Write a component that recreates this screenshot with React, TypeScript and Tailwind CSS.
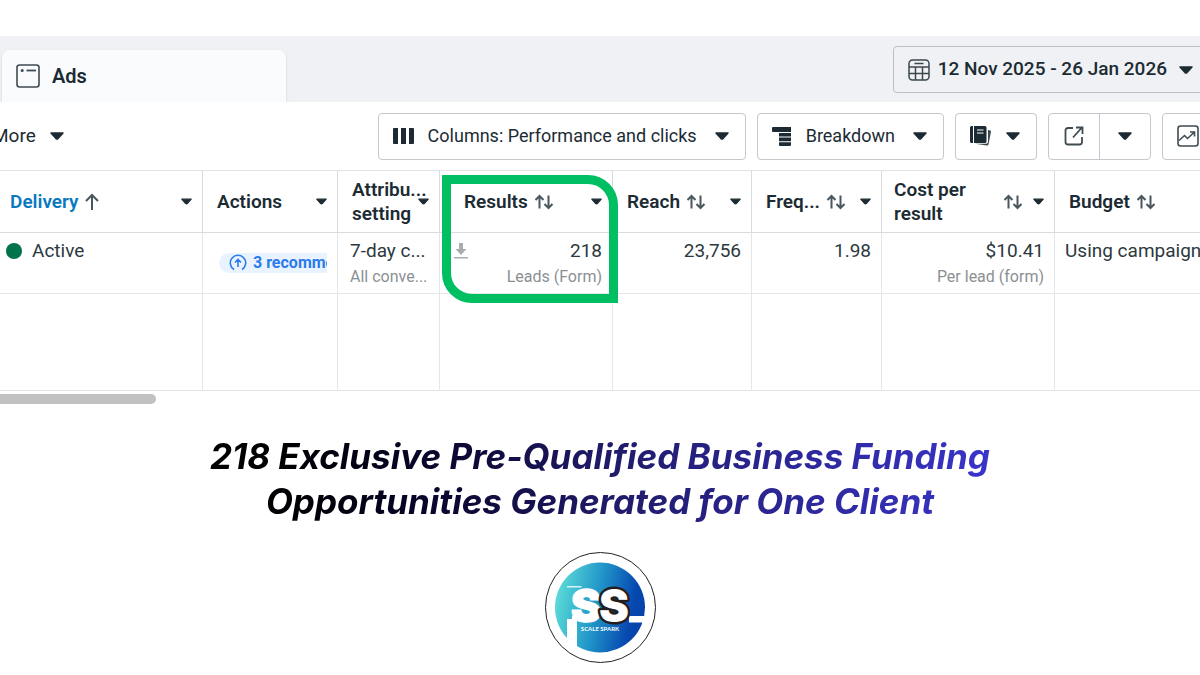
import type { ReactNode } from "react";
import clsx from "clsx";

interface Column {
  name: string;
  width: string;
  title: ReactNode;
  sort?: "up" | "both";
  spread?: boolean;
  menu?: boolean;
  active?: boolean;
  highlight?: boolean;
  padding: string;
}

const columns: Column[] = [
  { name: "delivery", width: "w-[203px]", title: "Delivery", sort: "up", menu: true, active: true, padding: "pl-2.5" },
  { name: "actions", width: "w-[135px]", title: "Actions", menu: true, padding: "pl-3.5" },
  { name: "attribution", width: "w-[102px]", title: <>Attribu...<br />setting</>, menu: true, padding: "pl-3.5" },
  { name: "results", width: "w-[173px]", title: "Results", sort: "both", menu: true, highlight: true, padding: "pl-6" },
  { name: "reach", width: "w-[139px]", title: "Reach", sort: "both", menu: true, padding: "pl-3.5" },
  { name: "frequency", width: "w-[130px]", title: "Freq...", sort: "both", menu: true, padding: "pl-3.5" },
  { name: "cost", width: "w-[173px]", title: <>Cost per<br />result</>, sort: "both", spread: true, menu: true, padding: "pl-3" },
  { name: "budget", width: "", title: "Budget", sort: "both", padding: "pl-3.5" },
];

const Caret = ({ small = false }: { small?: boolean }) => (
  <svg
    viewBox="0 0 14 8"
    className={clsx("shrink-0", small ? "h-[7px] w-[11px]" : "h-2 w-3.5")}
    fill="#1c2b33"
    stroke="#1c2b33"
    strokeWidth="1.5"
    strokeLinejoin="round"
  >
    <path d="M1 1h12L8 6.6Q7 7.4 6 6.6Z" />
  </svg>
);

const SortIcon = ({ kind }: { kind: "up" | "both" }) =>
  kind === "up" ? (
    <svg viewBox="0 0 14 18" className="h-[18px] w-3.5 shrink-0" fill="none" stroke="#4b575e" strokeWidth="2">
      <path d="M7 17V2M1 8l6-6 6 6" />
    </svg>
  ) : (
    <svg viewBox="0 0 20 16" className="h-4 w-5 shrink-0" fill="none" stroke="#4b575e" strokeWidth="2">
      <path d="M5.5 14.5V2M1.5 6L5.5 2 9.500 6M14.500 1.500V14M10.500 10l4 4 4-4" />
    </svg>
  );

const WindowIcon = () => (
  <svg viewBox="0 0 24 24" className="size-6" fill="none" stroke="#3f4b52" strokeWidth="1.600">
    <rect x="1" y="1" width="22" height="22" rx="2.500" />
    <path d="M10.500 6.500h9.500" strokeWidth="1.800" />
    <circle cx="6.200" cy="6.500" r="1.500" fill="#3f4b52" stroke="none" />
  </svg>
);

const CalendarIcon = () => (
  <svg viewBox="0 0 22 22" className="size-[22px]" fill="none" stroke="#3b474e" strokeWidth="1.500">
    <rect x="1" y="1" width="20" height="20" rx="3.500" />
    <path d="M6.500 4.500h9M1 8h20M1 14.500h20M7.500 8v13M14.500 8v13" />
  </svg>
);

const BreakdownIcon = () => (
  <svg viewBox="0 0 20 19" className="h-[19px] w-5" fill="#1c2b33">
    <path d="M1 0h18v5H1a1 1 0 0 1-1-1V1a1 1 0 0 1 1-1ZM7 6h12v3.600H7ZM7 10.600h12v3.600H7ZM7 15.200h12V18a1 1 0 0 1-1 1H8a1 1 0 0 1-1-1Z" />
  </svg>
);

const ReportIcon = () => (
  <svg viewBox="0 0 22 22" className="size-[22px]" fill="#1c2b33">
    <path d="M1.500 1H3v17H1.500A1.500 1.500 0 0 1 0 16.500v-14A1.500 1.500 0 0 1 1.500 1ZM4 1h11a1.500 1.500 0 0 1 1.500 1.500v14A1.500 1.500 0 0 1 15 18H4Z" />
    <path d="M7 5h6.500M7 8h6.500" stroke="#fff" strokeWidth="1.200" />
    <path d="M18 5l2.300.6a1 1 0 0 1 .7 1.200L18.500 19.500a1.500 1.500 0 0 1-1.800 1L5 18.800h11a2 2 0 0 0 2-2Z" fill="#3f4b52" />
  </svg>
);

const ExportIcon = () => (
  <svg viewBox="0 0 20 20" className="size-5" fill="none" stroke="#3f4b52" strokeWidth="1.800">
    <path d="M9 2H4a2.500 2.500 0 0 0-2.500 2.500V16A2.500 2.500 0 0 0 4 18.500h11.500A2.500 2.500 0 0 0 18 16v-5M9 11.500l8.500-9.500M12 1.500h6.500V8" />
  </svg>
);

const ChartIcon = () => (
  <svg viewBox="0 0 22 22" className="size-[22px] shrink-0" fill="none" stroke="#3f4b52" strokeWidth="1.600">
    <rect x="1" y="1" width="20" height="20" rx="2.500" />
    <path d="M2 15.500l5.500-5 3 3L17 7.500M13 7h4.500v4.500" />
  </svg>
);

const ToolButton = ({ children, label }: { children: ReactNode; label?: string }) => (
  <button
    aria-label={label}
    className="flex h-[47px] items-center gap-3.5 rounded border border-[#c3c9cd] bg-white pr-4 pl-3.5 text-lg whitespace-nowrap"
  >
    {children}
  </button>
);

const HeaderCell = ({ column }: { column: Column }) => (
  <th
    className={clsx(
      "relative h-[62px] border-b border-[#d9dcde] p-0 text-left font-semibold",
      column.name !== "budget" && "border-r",
      column.width
    )}
  >
    <div className={clsx("flex items-center gap-1.5 pr-2.5", column.padding)}>
      <span className={clsx("whitespace-nowrap", column.active && "text-[#0a78be]")}>{column.title}</span>
      {column.sort && (
        <span className={clsx(column.spread && "ml-auto")}>
          <SortIcon kind={column.sort} />
        </span>
      )}
      {column.menu && (
        <button
          aria-label={`${column.name} options`}
          className={clsx(column.spread ? "ml-1" : "ml-auto", column.name === "attribution" && "absolute right-2.5")}
        >
          <Caret small />
        </button>
      )}
    </div>
    {column.highlight && (
      <div className="pointer-events-none absolute top-1 -right-1.5 left-0.5 z-10 h-32 rounded-tr-[30px] rounded-bl-[30px] border-[9px] border-[#00bf63]" />
    )}
  </th>
);

const AdsTable = () => (
  <div className="overflow-hidden border-y border-[#e1e3e5]">
    <table className="w-full table-fixed border-separate border-spacing-0 text-[19px] leading-6">
      <thead>
        <tr>
          {columns.map((column) => (
            <HeaderCell key={column.name} column={column} />
          ))}
        </tr>
      </thead>
      <tbody>
        <tr className="h-[61px] align-top text-[#2c3940] *:border-b *:border-[#e4e6e8] *:pt-1.5 [&>td:not(:last-child)]:border-r">
          <td className="pl-1.5">
            <div className="flex items-center gap-2.5">
              <span className="size-4 rounded-full bg-[#00734a]" />
              Active
            </div>
          </td>
          <td className="pr-2.5 pl-4">
            <div className="mt-3.5 overflow-hidden">
              <a
                href="#recommendations"
                className="flex w-48 items-center gap-1.5 rounded-full bg-[#e9f3ff] pl-2.5 text-base leading-5 font-bold text-[#2b7bea]"
              >
                <svg viewBox="0 0 18 18" className="size-[18px] shrink-0" fill="none" stroke="currentColor" strokeWidth="1.600">
                  <path d="M5 15.500a7.700 7.700 0 1 1 8 0M9 13V6M6 8.500l3-3 3 3" />
                </svg>
                3 recommendations
              </a>
            </div>
          </td>
          <td className="pl-3 whitespace-nowrap">
            7-day c...
            <div className="mt-0.5 text-base leading-6 text-[#8a9094]">All conve...</div>
          </td>
          <td className="pr-2.5 text-right">
            <div className="flex items-center justify-between pl-3.5">
              <svg viewBox="0 0 14 16" className="h-4 w-3.5" fill="#a9adb1">
                <path d="M5 0h4v6h3.500L7 12 1.500 6H5ZM0 14h14v1.500H0Z" />
              </svg>
              218
            </div>
            <div className="mt-0.5 text-base leading-6 text-[#8a9094]">Leads (Form)</div>
          </td>
          <td className="pr-2.5 text-right">23,756</td>
          <td className="pr-2.5 text-right">1.98</td>
          <td className="pr-2.5 text-right">
            $10.41
            <div className="mt-0.5 text-base leading-6 text-[#8a9094]">Per lead (form)</div>
          </td>
          <td className="pl-2.5 whitespace-nowrap">Using campaign</td>
        </tr>
        <tr className="h-24">
          {columns.map((column) => (
            <td key={column.name} className="border-r border-[#e4e6e8] last:border-r-0" />
          ))}
        </tr>
      </tbody>
    </table>
  </div>
);

const Logo = () => (
  <svg viewBox="0 0 111 111" className="size-[111px]" role="img" aria-label="Scale Spark">
    <defs>
      <linearGradient id="disc" x1="0" y1="0.400" x2="1" y2="0.600">
        <stop offset="0" stopColor="#5bdcd8" />
        <stop offset="0.450" stopColor="#2196c9" />
        <stop offset="0.850" stopColor="#0648b0" />
        <stop offset="1" stopColor="#0443a8" />
      </linearGradient>
    </defs>
    <circle cx="55.500" cy="55.500" r="55" fill="#fff" stroke="#222" strokeWidth="1" />
    <circle cx="55" cy="55.500" r="45" fill="url(#disc)" />
    <path d="M22 34.800h14.500" stroke="#fff" strokeWidth="1.200" />
    <path d="M22 67h10v34l-10-6ZM84 64h17v6.500H84ZM27 64h12v5H27Z" fill="#fff" />
    <g fontFamily="Inter, sans-serif" fontWeight="900" fill="#fff" strokeLinejoin="round">
      <text x="26" y="70" fontSize="45" stroke="#fff" strokeWidth="1.500">S</text>
      <text x="54" y="70" fontSize="45" stroke="#231f20" strokeWidth="5" paintOrder="stroke">S</text>
    </g>
    <text x="55" y="79" textAnchor="middle" fontFamily="Lato, sans-serif" fontWeight="700" fontSize="6" fill="#fff">
      SCALE SPARK
    </text>
  </svg>
);

const App = () => {
  return (
    <main className="min-h-screen overflow-hidden bg-white pt-9 font-['Roboto','Liberation_Sans',sans-serif] text-[#1c2b33]">
      <header className="flex h-[66px] justify-between bg-[#eff1f5] pl-0.5">
        <a
          href="#ads"
          className="mt-3.5 flex w-[284px] items-center gap-3 rounded-t-lg bg-[#fafbfd] pl-3.5 text-xl font-semibold shadow-sm"
        >
          <WindowIcon />
          Ads
        </a>
        <button className="mt-2.5 -mr-1 flex h-[47px] items-center gap-2 rounded-l border border-[#b9c0c6] pr-2.5 pl-3.5 text-[19px] font-medium whitespace-nowrap">
          <CalendarIcon />
          12 Nov 2025 - 26 Jan 2026
          <span className="ml-1">
            <Caret />
          </span>
        </button>
      </header>

      <div className="relative z-10 flex h-[68px] items-center justify-between bg-white">
        <button className="-ml-2 flex items-center gap-3.5 text-[19px]">
          More
          <Caret />
        </button>
        <div className="-mr-4 flex gap-[11px]">
          <ToolButton>
            <svg viewBox="0 0 21 16" className="h-4 w-[21px]" fill="#1c2b33">
              <path d="M1 0h4v16H1a1 1 0 0 1-1-1V1a1 1 0 0 1 1-1ZM8 0h5v16H8ZM16 0h4a1 1 0 0 1 1 1v14a1 1 0 0 1-1 1h-4Z" />
            </svg>
            <span className="pr-1">Columns: Performance and clicks</span>
            <Caret />
          </ToolButton>
          <ToolButton>
            <BreakdownIcon />
            <span className="pr-1">Breakdown</span>
            <Caret />
          </ToolButton>
          <ToolButton label="Reports">
            <ReportIcon />
            <Caret />
          </ToolButton>
          <div className="flex h-[47px] divide-x divide-[#c3c9cd] rounded border border-[#c3c9cd]">
            <button aria-label="Export" className="px-[15px]">
              <ExportIcon />
            </button>
            <button aria-label="Export options" className="px-[18px]">
              <Caret />
            </button>
          </div>
          <ToolButton label="Charts">
            <ChartIcon />
          </ToolButton>
        </div>
      </div>

      <AdsTable />
      <div className="mt-[3px] h-2.5 w-[13%] rounded-r-full bg-[#c1c1c1]" />

      <section className="mt-[30px] flex flex-col items-center">
        <h1 className="bg-linear-to-r from-black via-[#1f1a66] to-[#3a35cc] bg-clip-text px-1 text-center font-['Inter',sans-serif] text-[35px] leading-[45px] font-bold text-transparent italic">
          218 Exclusive Pre-Qualified Business Funding
          <br />
          Opportunities Generated for One Client
        </h1>
        <div className="mt-7">
          <Logo />
        </div>
      </section>
    </main>
  );
};

export default App;
